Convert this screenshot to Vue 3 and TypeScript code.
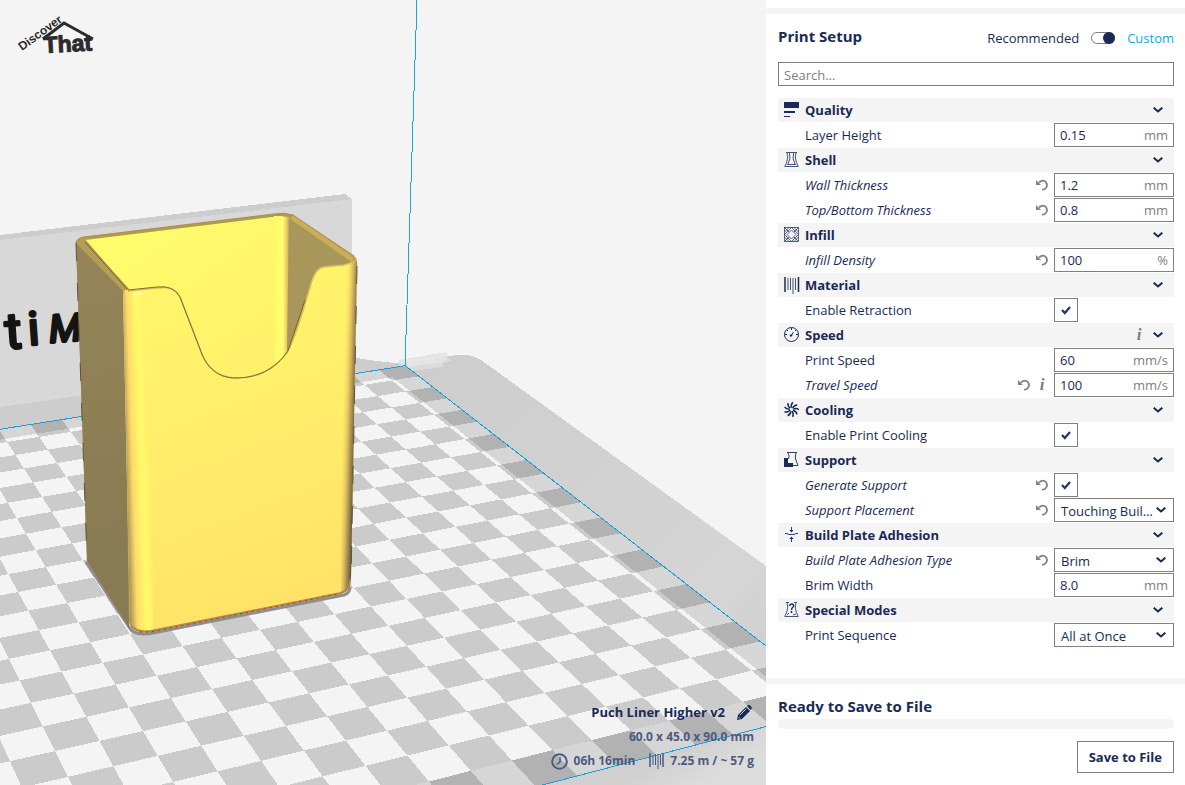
<script setup lang="ts">
import { reactive, ref } from 'vue'

interface Setting {
  id: string
  label: string
  kind: 'value' | 'check' | 'choice'
  value?: string
  unit?: string
  checked?: boolean
  options?: string[]
  changed?: boolean
  info?: boolean
}

interface Category {
  name: string
  icon: string
  info?: boolean
  settings: Setting[]
}

const categories = reactive<Category[]>([
  { name: 'Quality', icon: 'quality', settings: [
    { id: 'layer-height', label: 'Layer Height', kind: 'value', value: '0.15', unit: 'mm' },
  ] },
  { name: 'Shell', icon: 'shell', settings: [
    { id: 'wall', label: 'Wall Thickness', kind: 'value', value: '1.2', unit: 'mm', changed: true },
    { id: 'top-bottom', label: 'Top/Bottom Thickness', kind: 'value', value: '0.8', unit: 'mm', changed: true },
  ] },
  { name: 'Infill', icon: 'infill', settings: [
    { id: 'density', label: 'Infill Density', kind: 'value', value: '100', unit: '%', changed: true },
  ] },
  { name: 'Material', icon: 'material', settings: [
    { id: 'retraction', label: 'Enable Retraction', kind: 'check', checked: true },
  ] },
  { name: 'Speed', icon: 'speed', info: true, settings: [
    { id: 'print-speed', label: 'Print Speed', kind: 'value', value: '60', unit: 'mm/s' },
    { id: 'travel-speed', label: 'Travel Speed', kind: 'value', value: '100', unit: 'mm/s', changed: true, info: true },
  ] },
  { name: 'Cooling', icon: 'cooling', settings: [
    { id: 'cooling', label: 'Enable Print Cooling', kind: 'check', checked: true },
  ] },
  { name: 'Support', icon: 'support', settings: [
    { id: 'support', label: 'Generate Support', kind: 'check', checked: true, changed: true },
    { id: 'placement', label: 'Support Placement', kind: 'choice', value: 'Touching Buildplate', options: ['Touching Buildplate', 'Everywhere'], changed: true },
  ] },
  { name: 'Build Plate Adhesion', icon: 'adhesion', settings: [
    { id: 'adhesion', label: 'Build Plate Adhesion Type', kind: 'choice', value: 'Brim', options: ['Skirt', 'Brim', 'Raft'], changed: true },
    { id: 'brim', label: 'Brim Width', kind: 'value', value: '8.0', unit: 'mm' },
  ] },
  { name: 'Special Modes', icon: 'special', settings: [
    { id: 'sequence', label: 'Print Sequence', kind: 'choice', value: 'All at Once', options: ['All at Once', 'One at a Time'] },
  ] },
])

const custom = ref(true)
const search = ref('')

/* Projects a point of the build plate, in grid cells from the back corner, onto the view. */
function project(j: number, k: number): string {
  const d = 1 - 0.00609 * j - 0.015025 * k
  const x = (405.3 - 29.01 * j + 7.249 * k) / d
  const y = (365.7 + 1.937 * j + 4.87 * k) / d
  return `${x.toFixed(1)},${y.toFixed(1)}`
}

function quad(j0: number, k0: number, j1: number, k1: number): string {
  return `M${project(j0, k0)}L${project(j1, k0)}L${project(j1, k1)}L${project(j0, k1)}Z`
}

const edge = 22
let darkCells = ''
for (let j = 0; j < 32; j++) {
  for (let k = 0; k < edge; k++) {
    if ((j + k) % 2 === 0) darkCells += quad(j, k, j + 1, k + 1)
  }
}
const plate = quad(0, 0, 32, edge)
const rim = quad(0, 0, 32, edge) + quad(0.85, 0.75, 31, 21)
const volumeEdges = `M${project(32, 0)}L${project(0, 0)}L${project(0, edge)}L${project(32, edge)}`

const fins = Array.from({ length: 9 }, (_, i) => i * 40)
</script>

<template>
  <div class="app">
    <main class="view">
      <svg class="scene" viewBox="0 0 766 785" preserveAspectRatio="xMidYMid slice" aria-label="Build plate with model">
        <defs>
          <linearGradient id="front" gradientUnits="userSpaceOnUse" x1="170" y1="290" x2="290" y2="610">
            <stop offset="0" stop-color="#fff56a" />
            <stop offset="0.5" stop-color="#ffec69" />
            <stop offset="1" stop-color="#ffe267" />
          </linearGradient>
          <linearGradient id="corner" gradientUnits="userSpaceOnUse" x1="123" y1="460" x2="153" y2="459">
            <stop offset="0" stop-color="#8b7d54" />
            <stop offset="0.1" stop-color="#b39c58" />
            <stop offset="0.3" stop-color="#ffd967" />
            <stop offset="0.5" stop-color="#fff069" />
            <stop offset="0.65" stop-color="#fffb69" />
            <stop offset="1" stop-color="#fff169" stop-opacity="0" />
          </linearGradient>
          <linearGradient id="side" gradientUnits="userSpaceOnUse" x1="342" y1="430" x2="355" y2="430.4">
            <stop offset="0" stop-color="#f6d965" stop-opacity="0" />
            <stop offset="0.45" stop-color="#e0bd60" />
            <stop offset="1" stop-color="#66593d" />
          </linearGradient>
          <linearGradient id="inner" gradientUnits="userSpaceOnUse" x1="150" y1="240" x2="250" y2="380">
            <stop offset="0" stop-color="#fffb6b" />
            <stop offset="1" stop-color="#fff069" />
          </linearGradient>
          <linearGradient id="innercorner" gradientUnits="userSpaceOnUse" x1="274" y1="300" x2="290" y2="300">
            <stop offset="0" stop-color="#fff86b" />
            <stop offset="0.55" stop-color="#ffff70" />
            <stop offset="0.8" stop-color="#ecc864" />
            <stop offset="1" stop-color="#b19a5a" />
          </linearGradient>
          <linearGradient id="left" gradientUnits="userSpaceOnUse" x1="80" y1="260" x2="125" y2="560">
            <stop offset="0" stop-color="#948458" />
            <stop offset="1" stop-color="#887a52" />
          </linearGradient>
          <linearGradient id="bed" gradientUnits="userSpaceOnUse" x1="440" y1="355" x2="760" y2="650">
            <stop offset="0" stop-color="#cdcdcd" />
            <stop offset="0.85" stop-color="#d5d5d5" />
            <stop offset="1" stop-color="#d0d0d0" />
          </linearGradient>
          <linearGradient id="apron" gradientUnits="userSpaceOnUse" x1="680" y1="750" x2="700" y2="785">
            <stop offset="0" stop-color="#d0d0d0" />
            <stop offset="1" stop-color="#dcdcdc" />
          </linearGradient>
          <clipPath id="volume"><path :d="plate" /></clipPath>
        </defs>

        <rect width="766" height="785" fill="#f4f4f4" />
        <g shape-rendering="crispEdges">
          <path d="M0 402L350 357L376 361L405 364L450 356Q468 352 481 360L766 566V785H540L405 366L0 430Z" fill="url(#bed)" />
          <path d="M530 789L770 725V789Z" fill="url(#apron)" />
          <path d="M0 235L345 194L352 199V357L0 407Z" fill="#d8d8d8" />
          <path d="M0 235L345 194L352 199L0 240Z" fill="#cdcdcd" />
          <path d="M399 360L447 352V357L452 361L443 362V367L411 371L407 366H399Z" fill="#dedede" opacity=".8" />
          <path d="M407 360L446 354V362L408 367Z" fill="#e7e7e7" opacity=".7" />
          <path :d="plate" fill="#f4f4f4" />
          <path :d="darkCells" fill="#cbcbcb" />
          <g clip-path="url(#volume)">
            <path :d="rim" fill="#000" fill-opacity=".12" fill-rule="evenodd" />
          </g>
          <path :d="volumeEdges" fill="none" stroke="#1a9fd8" />
          <path d="M417 0L405 366" fill="none" stroke="#1fa5dc" />
        </g>

        <g transform="rotate(-4 30 345)" class="wall-text">
          <text x="6" y="347" class="wall-tall">t</text>
          <text x="29" y="345">i</text>
          <text x="50" y="344" class="wall-slant">M</text>
        </g>

        <path d="M86 562L131 630Q138 636 153 633L344 595Q350 593 350 587" fill="none" stroke="#8f8d8d" stroke-width="3" />
        <path d="M76 243Q77 237 84 237L274 214Q284 212 293 215L354 256Q358 259 357 266L351 578Q351 591 341 594L151 632Q137 634 131 626L87 561Z" fill="#b2994f" />
        <path d="M85 240L280 216L289 218L345 262L320 390H180L129 289Z" fill="url(#inner)" />
        <path d="M274 216L289 217V360L274 374Z" fill="url(#innercorner)" />
        <path d="M289 218L349 261L350 270L318 275L300 330L287 353Z" fill="#a9965a" />
        <path d="M76 243L124 291L129 628L87 561Z" fill="url(#left)" />
        <path d="M76 243Q79 237 85 239L128 289L124 292Z" fill="#b69d55" />
        <path d="M85 242L128 290" stroke="#6f6140" />
        <path d="M292 217L353 260" fill="none" stroke="#c9ad5a" stroke-width="5" />
        <path d="M76 243Q77 238 84 237L274 214Q284 212 293 215L354 256" fill="none" stroke="#a88f4b" />
        <path d="M123 292Q125 289 131 290L157 288Q174 285 180 297L200 349C205 364 215 378 236 378C256 378 275 370 288 351C299 330 306 298 313 278Q317 268 324 267L344 265Q353 263 357 261L351 578Q350 590 341 593L151 631Q138 634 130 625Z" fill="url(#front)" />
        <path d="M123 292Q125 289 131 290L153 289V631Q138 634 130 625Z" fill="url(#corner)" />
        <path d="M342 266Q353 263 357 261L351 578Q350 590 341 593Z" fill="url(#side)" />
        <path d="M128 291L157 288Q174 285 180 297L200 349C205 364 215 378 236 378C256 378 275 370 288 351C299 330 306 298 313 278Q317 268 324 267L344 265Q352 263 356 260" fill="none" stroke="#dcbd59" stroke-width="1.5" />
        <path d="M128 290L157 287Q174 285 180 297L200 349C205 364 215 378 236 378C256 378 275 370 288 351L305 300" fill="none" stroke="#7a6a38" />
        <path d="M239 380C258 380 276 371 289 353C298 338 308 304 314 281" fill="none" stroke="#fff46b" stroke-width="2" />
        <path d="M133 295Q138 293 143 294" fill="none" stroke="#fffdae" stroke-width="2" />
        <path d="M131 626Q137 633 151 631L341 593Q350 590 350 580" fill="none" stroke="#a38c4b" stroke-width="2" />
        <path d="M140 632L151 632L338 594" fill="none" stroke="#f01c1c" stroke-dasharray="2 4" />
        <path d="M76 243L87 561" stroke="#5d5439" stroke-dasharray="18 22" />
        <path d="M357 266L351 580" stroke="#5d5439" stroke-dasharray="18 22" />

        <g class="logo">
          <text x="22" y="51" transform="rotate(-36 22 51)" class="logo-small">Discover</text>
          <path d="M43 39L64 23L93 39" fill="none" stroke="#2b2b2b" stroke-width="3" />
          <text x="44" y="53" transform="rotate(-3 44 53)" class="logo-large">That</text>
        </g>
      </svg>

      <section class="job" aria-label="Print job">
        <div class="job-name">
          <span>Puch Liner Higher v2</span>
          <button type="button" class="plain" aria-label="Rename job">
            <svg width="15" height="15" viewBox="0 0 15 15"><path d="M0 15L1 10L9 2L13 6L5 14ZM10 1L11 0Q12 -.5 13 .5L14.500 2Q15 3 14.500 4L13.500 5Z" fill="#192a56" /><path d="M3 10L9 4M1.500 12L3 13.500" stroke="#cdd0d8" /></svg>
          </button>
        </div>
        <div class="job-line">60.0 x 45.0 x 90.0 mm</div>
        <div class="job-line job-stats">
          <svg width="17" height="17" viewBox="0 0 17 17" fill="none" stroke="#4d5a80" stroke-width="2"><circle cx="8.500" cy="8.500" r="7.300" /><path d="M9 4V9L5.500 11.500" stroke-width="1.500" /></svg>
          <span class="time">06h 16min</span>
          <svg width="15" height="16" viewBox="0 0 15 16" fill="none" stroke="#4d5a80"><path d="M1 0V14M14 0V14" stroke-width="1.500" /><path d="M4 2V12M6.500 1V12M9 1V16M11.500 2V12" /></svg>
          <span>7.25 m / ~ 57 g</span>
        </div>
      </section>
    </main>

    <aside class="sidebar">
      <div class="band"></div>
      <header class="setup-head">
        <h1>Print Setup</h1>
        <div class="mode">
          <label for="mode">Recommended</label>
          <input id="mode" v-model="custom" type="checkbox" role="switch" class="switch" />
          <span class="mode-custom">Custom</span>
        </div>
      </header>
      <input v-model="search" class="search" type="text" placeholder="Search..." aria-label="Search settings" />

      <div class="settings">
        <template v-for="cat in categories" :key="cat.name">
          <button type="button" class="category">
            <svg class="cat-icon" width="16" height="16" viewBox="0 0 16 16" fill="none" stroke="#192a56">
              <g v-if="cat.icon === 'quality'" fill="#192a56" stroke="none"><path d="M0 0H15V6H0ZM0 9H11V11H0ZM0 14H6V15H0Z" /></g>
              <g v-else-if="cat.icon === 'shell'" stroke-width=".8"><path d="M2 .5H13M3 1Q5 6 1 14M12 1Q10 6 14 14M.5 14.500H14.500M5.500 1Q7 7 4 12M9.500 1Q8 7 11 12M3 12.500H12" /></g>
              <g v-else-if="cat.icon === 'infill'" stroke-width=".7"><rect x=".5" y=".5" width="14" height="14" /><path d="M.5 5L5 .5M10 14.500L14.500 10M.5 10L5 14.500M10 .5L14.500 5M1 1L5 5M10 10L14 14M14 1L10 5M5 10L1 14M.5 7.500L7.500 .5L14.500 7.500L7.500 14.500ZM3 7.500L7.500 3L12 7.500L7.500 12Z" /></g>
              <g v-else-if="cat.icon === 'material'"><path d="M1 0V15M14.500 0V15" stroke-width="1.500" /><path d="M4 1V13M6.500 1V13M9 1V17M11.500 1V13" stroke-width=".8" /></g>
              <g v-else-if="cat.icon === 'speed'"><circle cx="7.500" cy="7.500" r="7" /><path d="M7.500 1V3M3 3L4 4M12 3L11 4M1 7.500H3M12 7.500H14M7 9L9.500 5" /><circle cx="7" cy="8.500" r=".8" fill="#192a56" /></g>
              <g v-else-if="cat.icon === 'cooling'" stroke-width="1.500"><path v-for="a in fins" :key="a" d="M7.500 5.800Q6.500 2.500 9 .3" :transform="`rotate(${a} 7.500 7.500)`" /></g>
              <g v-else-if="cat.icon === 'support'"><path d="M3 .5H13M4 1Q6 4 4.500 7M12 1Q11 4 11.500 7L14 13.500H9" stroke-width=".9" /><path d="M0 6H4V11H9V15H0Z" fill="#192a56" stroke="none" /></g>
              <g v-else-if="cat.icon === 'adhesion'" stroke-width=".9"><path d="M1 6.500H3L5 7.500H10L12 6.500H14" /><path d="M7.500 0V5M7.500 15V10" /><path d="M5.500 3H9.500L7.500 5.500ZM5.500 12H9.500L7.500 9.500Z" fill="#192a56" stroke="none" /></g>
              <g v-else stroke-width=".8"><path d="M2 .5H5M10 .5H13M3 1Q5 6 1 14M12 1Q10 6 14 14M.5 14.500H14.500" /><path d="M5.500 4Q6 2 7.500 2Q10 2 9.500 4.500Q7.500 6 7.500 8M7.500 9V11" stroke-width="1.500" /><path d="M3 13L5 11M9 13L12 12" /></g>
            </svg>
            <span>{{ cat.name }}</span>
            <span v-if="cat.info" class="info">i</span>
            <svg class="chevron" width="10" height="6" viewBox="0 0 10 6" fill="none" stroke="#192a56" stroke-width="2"><path d="M.7 .7L5 4.500L9.300 .7" /></svg>
          </button>

          <div v-for="s in cat.settings" :key="s.id" class="setting">
            <label :for="s.id" :class="{ changed: s.changed }">{{ s.label }}</label>
            <button v-if="s.changed" type="button" class="plain" :aria-label="`Reset ${s.label}`">
              <svg width="12" height="12" viewBox="0 0 12 12"><path d="M3 3.500Q7 0 10 3.200Q12.300 7 9.300 9.600Q8 10.700 6 10.700" fill="none" stroke="#808080" stroke-width="1.800" /><path d="M0 1V6H5Z" fill="#808080" /></svg>
            </button>
            <span v-if="s.info" class="info">i</span>
            <div class="control">
              <div v-if="s.kind === 'value'" class="field">
                <input :id="s.id" v-model="s.value" type="text" />
                <span>{{ s.unit }}</span>
              </div>
              <div v-else-if="s.kind === 'check'" class="check">
                <input :id="s.id" v-model="s.checked" type="checkbox" />
                <svg v-if="s.checked" width="10" height="9" viewBox="0 0 10 9"><path d="M1 4L3.800 7L9 1" fill="none" stroke="#26386a" stroke-width="2.200" /></svg>
              </div>
              <div v-else class="choice">
                <select :id="s.id" v-model="s.value">
                  <option v-for="o in s.options" :key="o">{{ o }}</option>
                </select>
                <svg width="10" height="6" viewBox="0 0 10 6" fill="none" stroke="#192a56" stroke-width="2"><path d="M.7 .7L5 4.500L9.300 .7" /></svg>
              </div>
            </div>
          </div>
        </template>
      </div>

      <footer class="save">
        <div class="band"></div>
        <h2>Ready to Save to File</h2>
        <div class="progress" role="progressbar" aria-label="Slicing progress" aria-valuenow="0"></div>
        <button type="button" class="save-button">Save to File</button>
      </footer>
    </aside>
  </div>
</template>

<style>
body {
  margin: 0;
}
</style>

<style scoped>
.app {
  display: flex;
  height: 100vh;
  overflow: hidden;
  font: 13px/24px 'Open Sans', 'Noto Sans', sans-serif;
  color: #192a56;
  background: #fff;
}

button,
input,
select {
  font: inherit;
  color: inherit;
  box-sizing: border-box;
  margin: 0;
}

.view {
  position: relative;
  flex: 1;
  min-width: 0;
  display: flex;
  align-items: flex-end;
  justify-content: flex-end;
}

.scene {
  position: absolute;
  inset: 0;
  width: 100%;
  height: 100%;
}

.wall-text {
  font: 46px Roboto, sans-serif;
  fill: #141414;
  stroke: #141414;
  stroke-width: 3px;
  stroke-linejoin: round;
}

.wall-tall {
  font-size: 50px;
}

.wall-slant {
  font-size: 38px;
  font-style: italic;
}

.logo {
  font-family: 'Liberation Sans', sans-serif;
  font-weight: 700;
  fill: #2b2b2b;
}

.logo-small {
  font-size: 12px;
}

.logo-large {
  font-size: 23px;
  stroke: #2b2b2b;
}

.job {
  position: relative;
  padding: 0 12px 12px 0;
  font-weight: 700;
  text-align: right;
}

.job-name,
.job-stats {
  display: flex;
  align-items: center;
  justify-content: flex-end;
}

.job-name {
  gap: 12px;
  padding: 0 2px 1px 0;
}

.job-line {
  font-size: 12px;
  color: #4d5a80;
}

.job-stats {
  gap: 6px;
}

.time {
  margin-right: 8px;
}

.plain {
  display: flex;
  padding: 0;
  border: 0;
  background: none;
}

.sidebar {
  flex: 0 0 419px;
  display: flex;
  flex-direction: column;
  background: #fff;
}

.band {
  height: 6px;
  background: #f4f4f4;
}

.sidebar > .band {
  margin-top: 8px;
}

.setup-head {
  display: flex;
  justify-content: space-between;
  padding: 12px 11px 0 12px;
}

h1,
h2 {
  margin: 0;
  font-size: 15px;
  line-height: 20px;
  font-weight: 700;
}

.mode {
  display: flex;
  align-items: center;
  gap: 12px;
}

.mode-custom {
  color: #12a9e0;
}

.switch {
  appearance: none;
  width: 24px;
  height: 12px;
  border: 1px solid #808080;
  border-radius: 6px;
  background: #fff;
}

.switch::after {
  content: '';
  display: block;
  width: 12px;
  height: 12px;
  margin: -1px;
  border-radius: 50%;
  background: #192a56;
}

.switch:checked::after {
  margin-left: auto;
}

.search {
  height: 24px;
  margin: 12px 11px 12px 12px;
  padding: 2px 5px 0;
  border: 1px solid #808080;
  background: #fff;
}

.search::placeholder {
  color: #808080;
  opacity: 1;
}

.settings {
  display: flex;
  flex-direction: column;
  gap: 1px;
  padding: 0 11px 0 12px;
}

.category {
  display: flex;
  align-items: center;
  height: 24px;
  padding: 0 11px 0 6px;
  border: 0;
  background: #f4f4f4;
  font-weight: 700;
}

.cat-icon {
  margin-right: 5px;
  overflow: visible;
}

.chevron {
  margin-left: auto;
}

.info {
  width: 12px;
  color: #808080;
  font: italic 700 17px/24px 'Liberation Serif', serif;
  text-align: center;
}

.category .info {
  margin-left: auto;
}

.category .info + .chevron {
  margin-left: 8px;
}

.setting {
  display: flex;
  align-items: center;
  gap: 6px;
  height: 24px;
  padding-left: 27px;
}

.setting label {
  flex: 1;
}

.changed {
  font-style: italic;
}

.control {
  width: 120px;
}

.field,
.check,
.choice {
  display: flex;
  align-items: center;
  box-sizing: border-box;
  height: 24px;
  border: 1px solid #808080;
  background: #fff;
}

.field {
  padding: 0 5px;
}

.field input {
  flex: 1;
  min-width: 0;
  height: 22px;
  padding: 0;
  border: 0;
  background: none;
}

.field span {
  color: #808080;
}

.check {
  position: relative;
  width: 24px;
  justify-content: center;
}

.check input {
  position: absolute;
  inset: 0;
  width: 100%;
  height: 100%;
  opacity: 0;
}

.choice {
  position: relative;
}

.choice select {
  align-self: flex-start;
  width: 100%;
  height: 20px;
  padding: 0 18px 0 6px;
  border: 0;
  appearance: none;
  background: none;
  overflow: hidden;
  text-overflow: ellipsis;
  white-space: nowrap;
}

.choice svg {
  position: absolute;
  right: 7px;
  pointer-events: none;
}

.save {
  display: flex;
  flex-direction: column;
  margin-top: auto;
  padding-bottom: 12px;
}

.save h2 {
  padding: 12px 12px 0;
}

.progress {
  height: 10px;
  margin: 3px 11px 12px 12px;
  border-radius: 5px;
  background: #f4f4f4;
}

.save-button {
  align-self: flex-end;
  height: 32px;
  margin-right: 11px;
  padding: 0 11px;
  border: 1px solid #808080;
  background: #fff;
  font-weight: 700;
}
</style>
